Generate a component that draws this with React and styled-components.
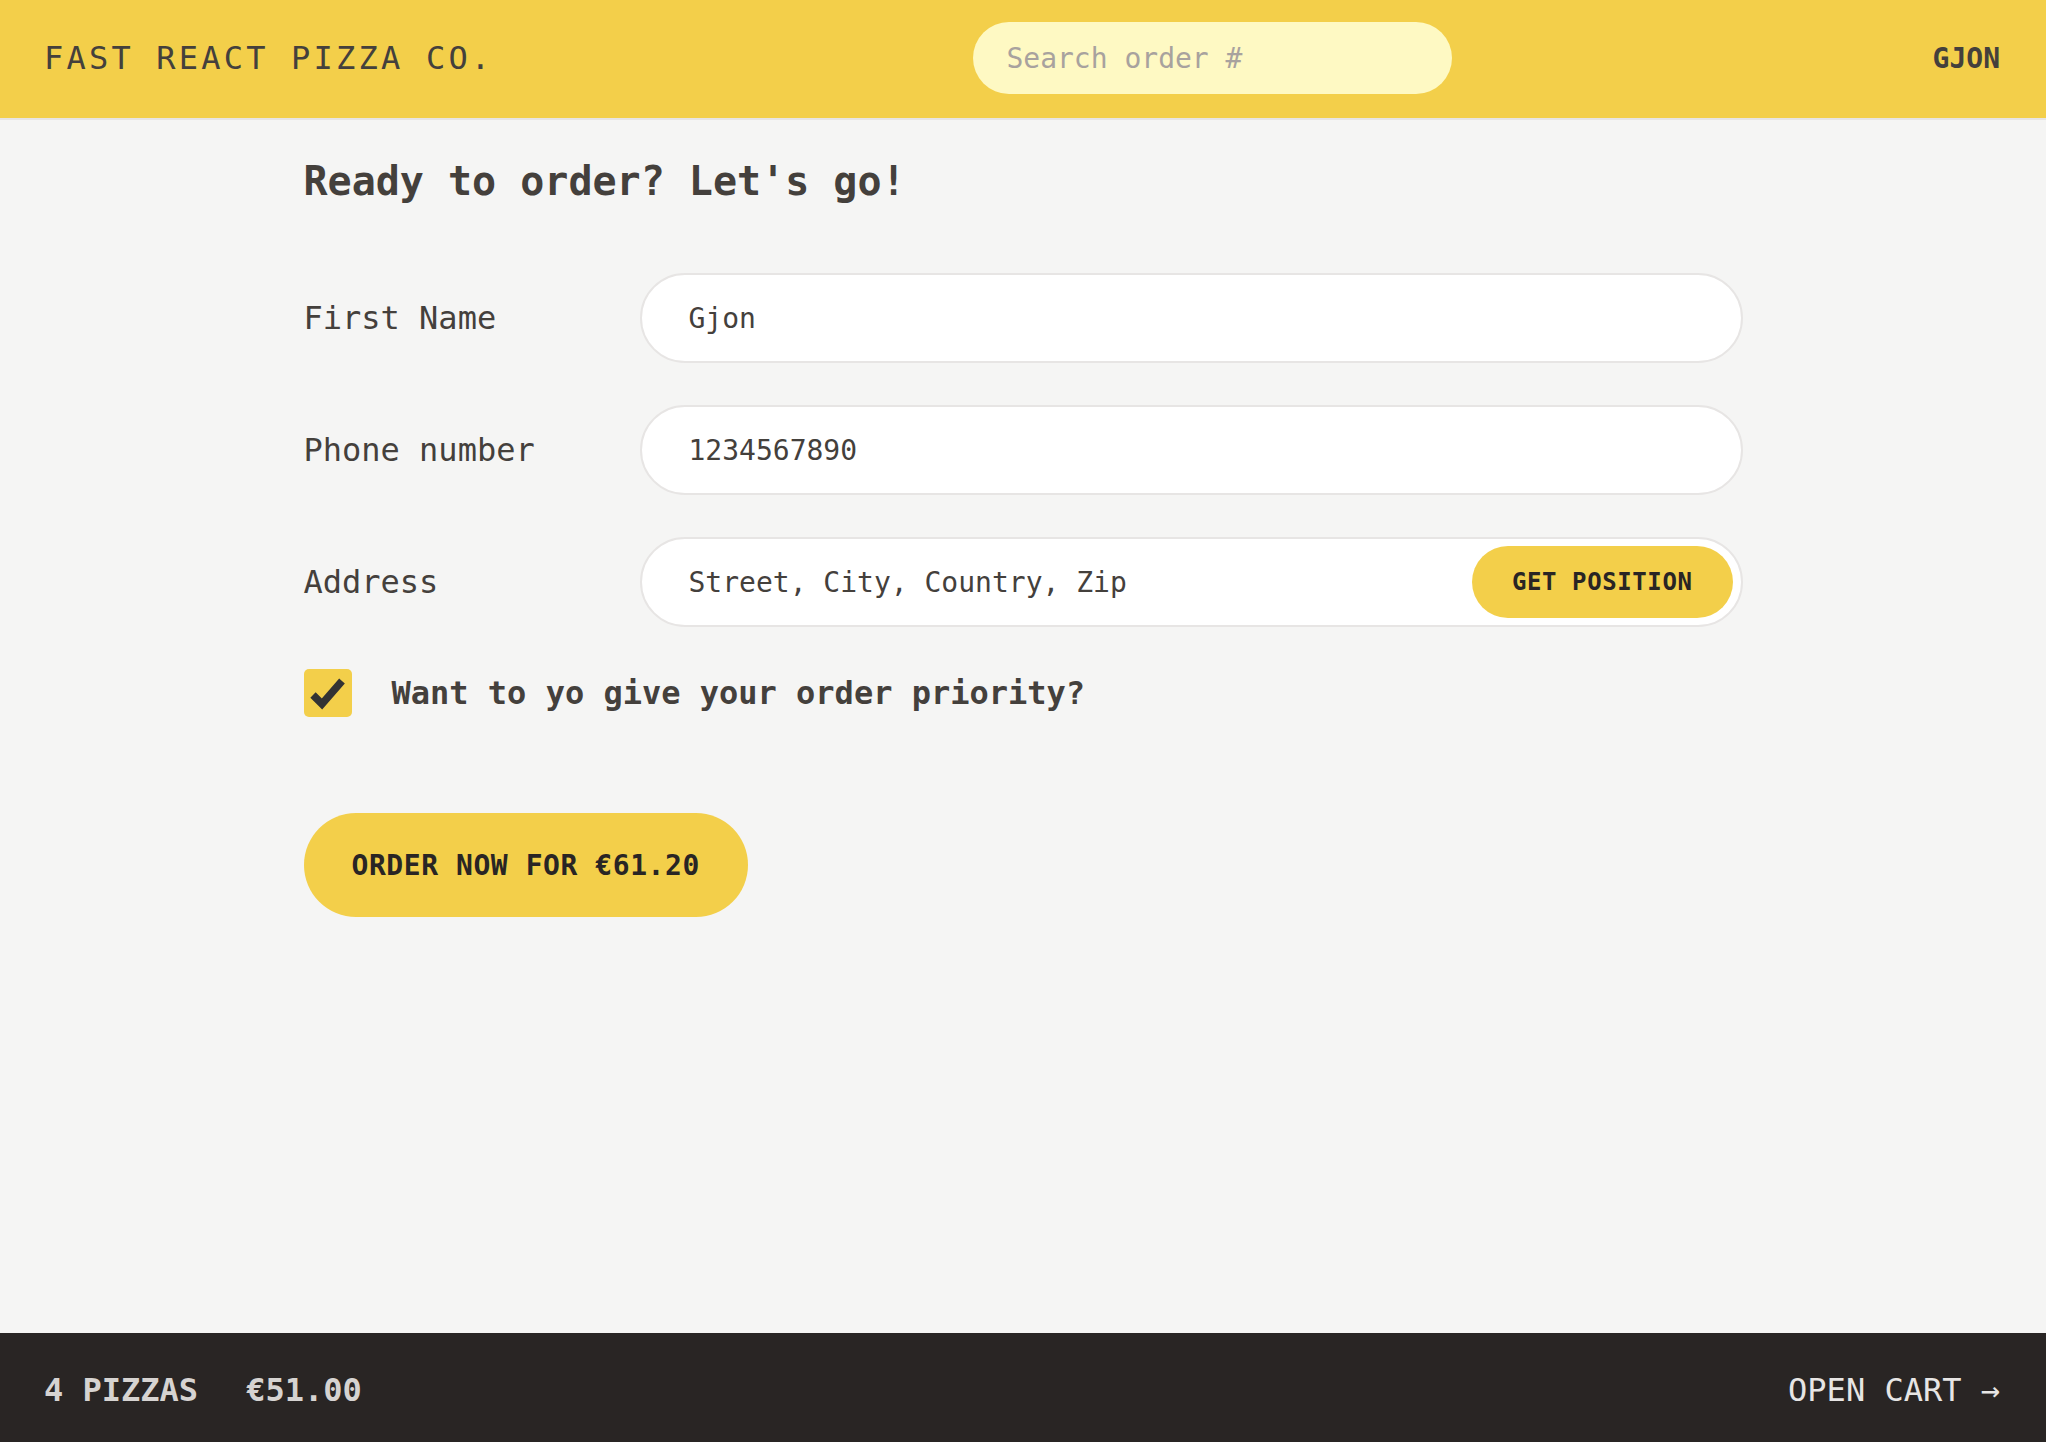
import React from "react";
import styled, { createGlobalStyle } from "styled-components";

const GlobalStyle = createGlobalStyle`
  * { box-sizing: border-box; }
  html, body { margin: 0; padding: 0; }
  body {
    font-family: "DejaVu Sans Mono", "Liberation Mono", monospace;
    color: #44403c;
    background: #f5f5f4;
  }
`;

const Layout = styled.div`
  display: grid;
  grid-template-rows: auto 1fr auto;
  height: 100vh;
`;

const Header = styled.header`
  display: flex;
  align-items: center;
  justify-content: space-between;
  padding: 22px 46px 24px 44px;
  background: #f3cf4a;
  border-bottom: 2px solid #e7e5e4;
  text-transform: uppercase;
`;

const Logo = styled.a`
  font-size: 32px;
  letter-spacing: 0.1em;
  color: #44403c;
  text-decoration: none;
`;

const Search = styled.input`
  width: 479px;
  height: 72px;
  border: none;
  border-radius: 999px;
  padding: 0 33px;
  background: #fef9c3;
  font-family: inherit;
  font-size: 28px;
  color: #44403c;
  outline: none;

  &::placeholder {
    color: #a8a29e;
  }
`;

const Username = styled.div`
  font-size: 28px;
  font-weight: 700;
  color: #44403c;
`;

const Main = styled.main`
  overflow: hidden;
`;

const Container = styled.div`
  max-width: 1439px;
  margin: 0 auto;
  padding-top: 33px;
`;

const Title = styled.h2`
  margin: 0 0 64px;
  font-size: 40px;
  line-height: 56px;
  font-weight: 700;
`;

const Row = styled.div`
  display: flex;
  align-items: center;
  gap: 16px;
  margin-bottom: 42px;
`;

const Label = styled.label`
  flex: 0 0 320px;
  font-size: 32px;
  line-height: 48px;
`;

const Field = styled.div`
  position: relative;
  flex: 1;
`;

const Input = styled.input`
  display: block;
  width: 100%;
  height: 90px;
  border: 2px solid #e7e5e4;
  border-radius: 999px;
  padding: 0 46px 0 47px;
  background: #fff;
  font-family: inherit;
  font-size: 28px;
  color: #44403c;
  outline: none;
`;

const Button = styled.button`
  height: ${(p) => (p.small ? "72px" : "104px")};
  padding: 0 ${(p) => (p.small ? "40px" : "48px")};
  border: none;
  border-radius: 999px;
  background: #f3cf4a;
  color: #292524;
  font-family: inherit;
  font-size: ${(p) => (p.small ? "24px" : "28px")};
  font-weight: 700;
  letter-spacing: ${(p) => (p.small ? "0.025em" : "0.02em")};
  text-transform: uppercase;
  cursor: pointer;
`;

const PositionSlot = styled.span`
  position: absolute;
  top: 9px;
  right: 10px;
`;

const CheckRow = styled.div`
  display: flex;
  align-items: center;
  gap: 40px;
  margin-bottom: 96px;
`;

const CheckBox = styled.span`
  display: flex;
  width: 48px;
  height: 48px;
  border-radius: 5px;
  background: #f3cf4a;
`;

const CheckLabel = styled.label`
  font-size: 32px;
  font-weight: 700;
  line-height: 48px;
`;

const Footer = styled.footer`
  display: flex;
  align-items: center;
  justify-content: space-between;
  height: 109px;
  padding: 4px 46px 0 44px;
  background: #292524;
  font-size: 32px;
  text-transform: uppercase;
`;

const Summary = styled.p`
  display: flex;
  gap: 48px;
  margin: 0;
  font-weight: 700;
  color: #d6d3d1;
`;

const CartLink = styled.a`
  color: #e7e5e4;
  text-decoration: none;
`;

export default function App() {
  return (
    <Layout>
      <GlobalStyle />
      <Header>
        <Logo href="#">Fast React Pizza Co.</Logo>
        <Search placeholder="Search order #" />
        <Username>Gjon</Username>
      </Header>
      <Main>
        <Container>
          <Title>Ready to order? Let's go!</Title>
          <Row>
            <Label>First Name</Label>
            <Field>
              <Input defaultValue="Gjon" />
            </Field>
          </Row>
          <Row>
            <Label>Phone number</Label>
            <Field>
              <Input defaultValue="1234567890" />
            </Field>
          </Row>
          <Row>
            <Label>Address</Label>
            <Field>
              <Input defaultValue="Street, City, Country, Zip" />
              <PositionSlot>
                <Button small>Get position</Button>
              </PositionSlot>
            </Field>
          </Row>
          <CheckRow>
            <CheckBox>
              <svg width="48" height="48" viewBox="0 0 48 48">
                <polyline points="9,26 18,35 38,12" fill="none" stroke="#333" strokeWidth="7.5" />
              </svg>
            </CheckBox>
            <CheckLabel>Want to yo give your order priority?</CheckLabel>
          </CheckRow>
          <Button>Order now for €61.20</Button>
        </Container>
      </Main>
      <Footer>
        <Summary>
          <span>4 pizzas</span>
          <span>€51.00</span>
        </Summary>
        <CartLink href="#">Open cart →</CartLink>
      </Footer>
    </Layout>
  );
}
